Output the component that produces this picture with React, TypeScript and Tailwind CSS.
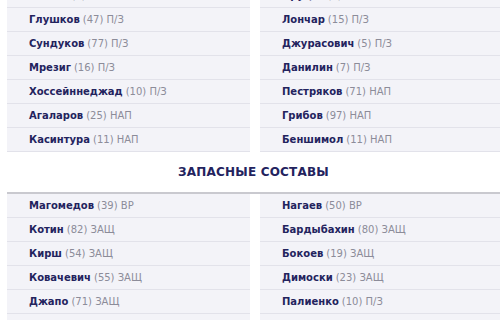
import React from 'react';

type Player = { name: string; num: string; pos: string };

const startHome: Player[] = [
  { name: 'Азизов', num: '4', pos: 'П/З' },
  { name: 'Глушков', num: '47', pos: 'П/З' },
  { name: 'Сундуков', num: '77', pos: 'П/З' },
  { name: 'Мрезиг', num: '16', pos: 'П/З' },
  { name: 'Хоссейннеджад', num: '10', pos: 'П/З' },
  { name: 'Агаларов', num: '25', pos: 'НАП' },
  { name: 'Касинтура', num: '11', pos: 'НАП' },
];

const startAway: Player[] = [
  { name: 'Пруцев', num: '8', pos: 'П/З' },
  { name: 'Лончар', num: '15', pos: 'П/З' },
  { name: 'Джурасович', num: '5', pos: 'П/З' },
  { name: 'Данилин', num: '7', pos: 'П/З' },
  { name: 'Пестряков', num: '71', pos: 'НАП' },
  { name: 'Грибов', num: '97', pos: 'НАП' },
  { name: 'Беншимол', num: '11', pos: 'НАП' },
];

const subsHome: Player[] = [
  { name: 'Магомедов', num: '39', pos: 'ВР' },
  { name: 'Котин', num: '82', pos: 'ЗАЩ' },
  { name: 'Кирш', num: '54', pos: 'ЗАЩ' },
  { name: 'Ковачевич', num: '55', pos: 'ЗАЩ' },
  { name: 'Джапо', num: '71', pos: 'ЗАЩ' },
  { name: 'Исмаилов', num: '17', pos: 'П/З' },
];

const subsAway: Player[] = [
  { name: 'Нагаев', num: '50', pos: 'ВР' },
  { name: 'Бардыбахин', num: '80', pos: 'ЗАЩ' },
  { name: 'Бокоев', num: '19', pos: 'ЗАЩ' },
  { name: 'Димоски', num: '23', pos: 'ЗАЩ' },
  { name: 'Палиенко', num: '10', pos: 'П/З' },
  { name: 'Ткачук', num: '21', pos: 'П/З' },
];

function Row({ p }: { p: Player }) {
  return (
    <div className="h-6 flex items-center pl-[22px] bg-[#f3f3f8] border-b border-[#e2e2ea] text-[10px] whitespace-nowrap">
      <span className="font-bold text-[#23235e]">{p.name}</span>
      <span className="ml-[3px] text-[#8c8c99]">({p.num}) {p.pos}</span>
    </div>
  );
}

function Column({ players }: { players: Player[] }) {
  return (
    <div className="flex flex-col">
      {players.map((p, i) => (
        <Row key={i} p={p} />
      ))}
    </div>
  );
}

export default function App() {
  return (
    <div className="w-[500px] h-[320px] overflow-hidden bg-white" style={{ fontFamily: '"DejaVu Sans", sans-serif' }}>
      <div className="-mt-4 pl-[7px]">
        {/* starting lineups */}
        <div className="grid grid-cols-[243px_1fr] gap-x-[10px]">
          <Column players={startHome} />
          <Column players={startAway} />
        </div>

        {/* substitutes header */}
        <div className="h-10 flex items-center justify-center text-[12px] font-bold text-[#23235e] tracking-[0.2px]">
          ЗАПАСНЫЕ СОСТАВЫ
        </div>
        <div className="border-t-2 border-[#c9c9cf]" />

        <div className="grid grid-cols-[243px_1fr] gap-x-[10px]">
          <Column players={subsHome} />
          <Column players={subsAway} />
        </div>
      </div>
    </div>
  );
}
